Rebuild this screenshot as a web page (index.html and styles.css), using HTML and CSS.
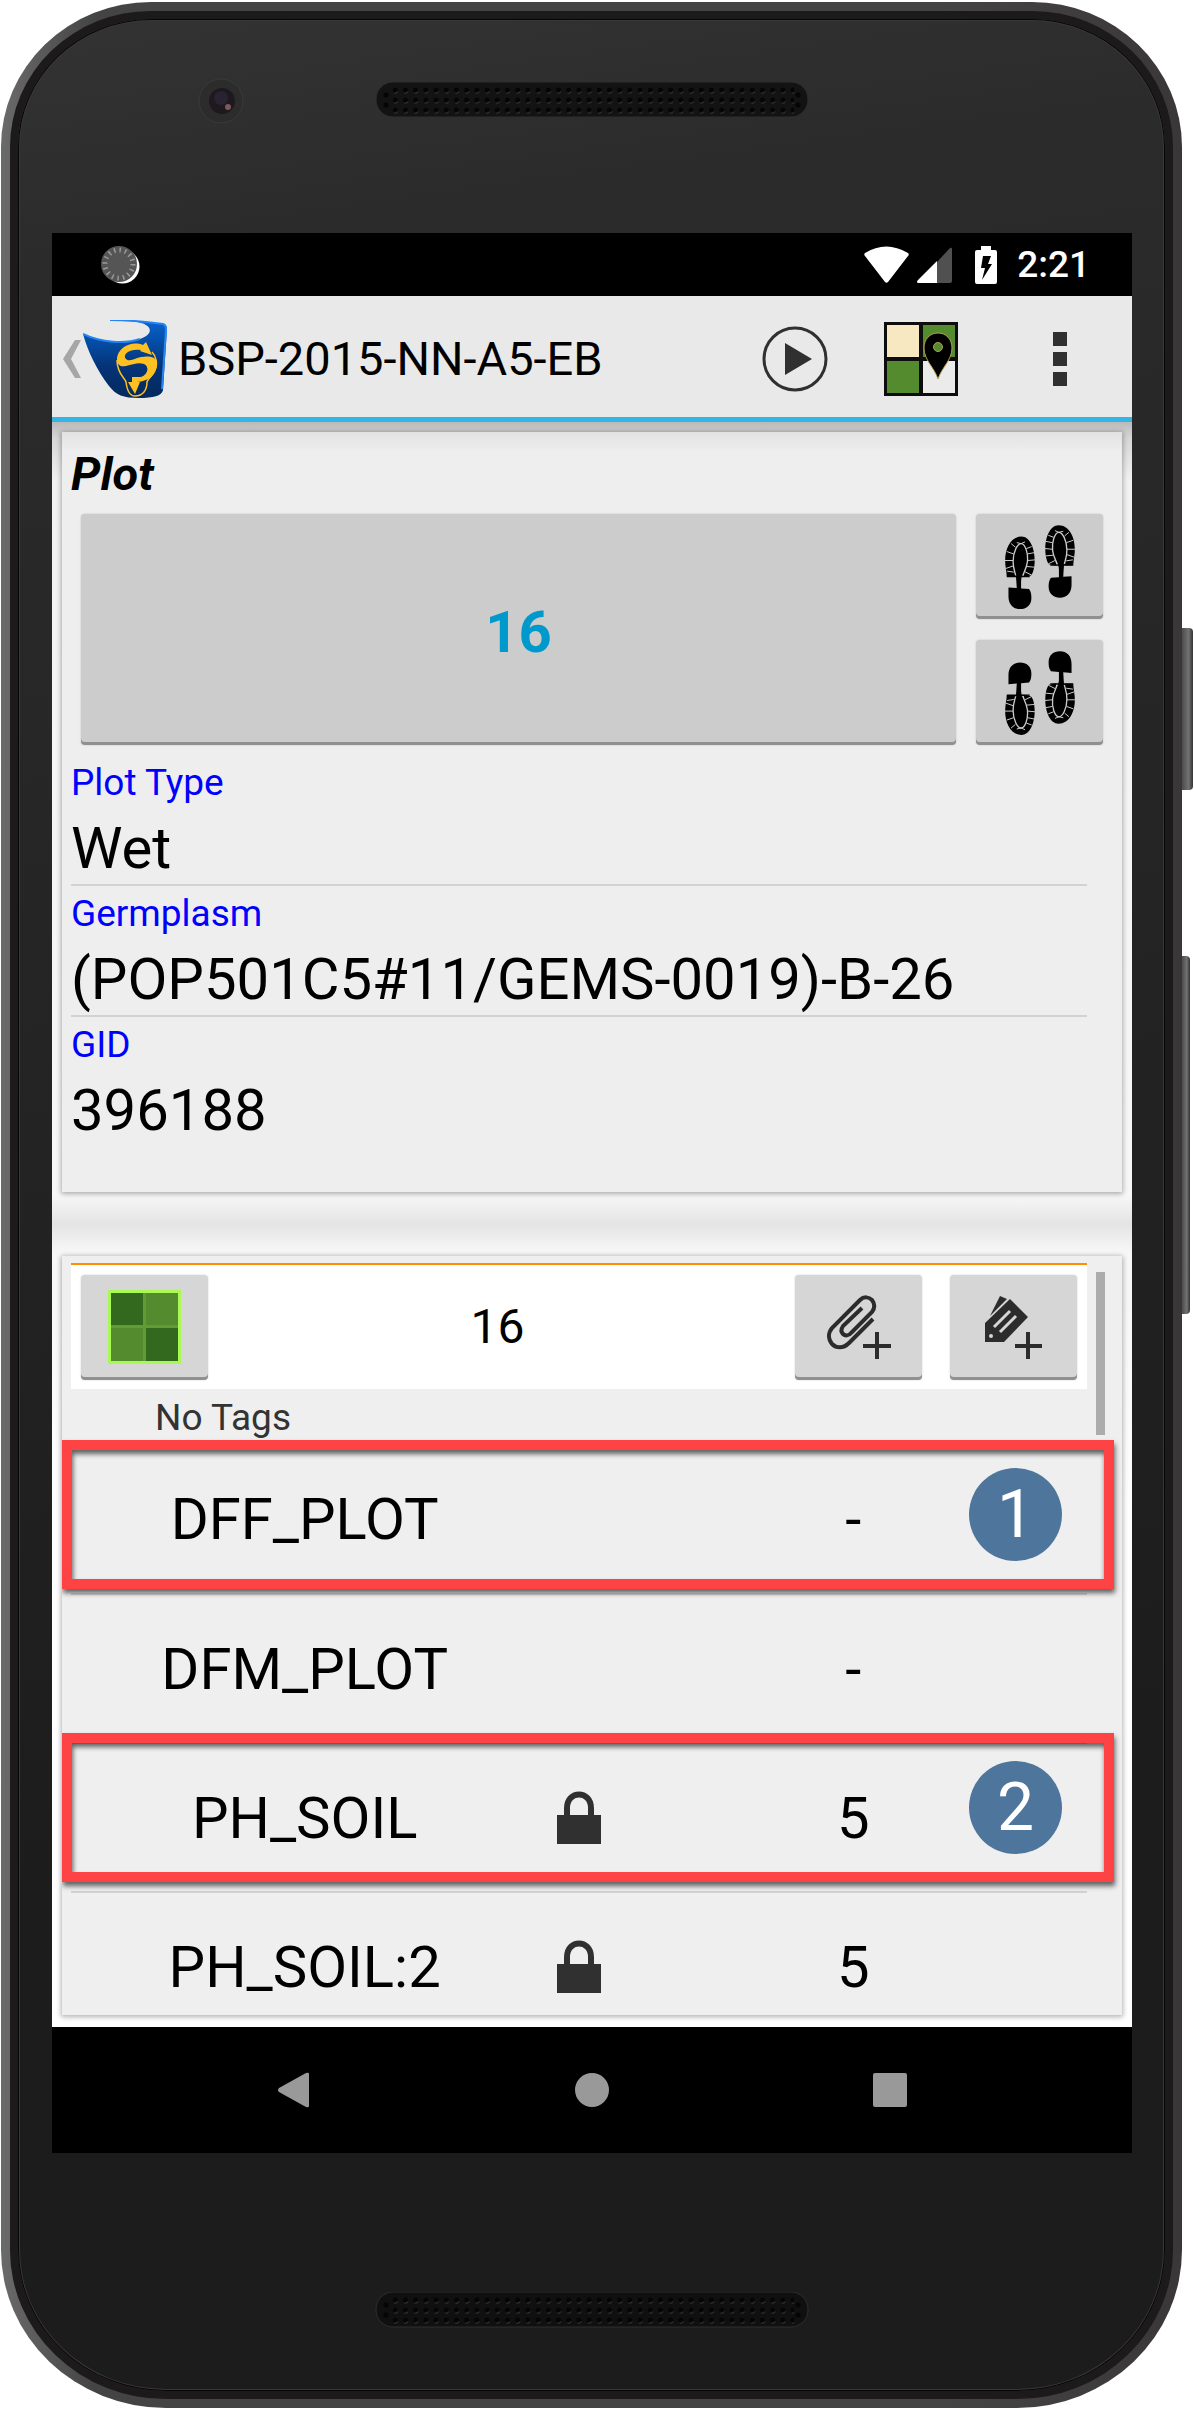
FILE: index.html
```html
<!DOCTYPE html>
<html lang="en">
<head>
<meta charset="utf-8">
<meta name="viewport" content="width=device-width, initial-scale=1">
<title>BSP-2015-NN-A5-EB</title>
<link rel="stylesheet" href="styles.css">
</head>
<body>
<svg width="0" height="0" class="defs" aria-hidden="true">
  <defs>
    <pattern id="holes" x="5" y="3" width="10.2" height="10" patternUnits="userSpaceOnUse">
      <circle cx="5.1" cy="5" r="2.6" fill="#050505"/>
      <path d="M4 8A3 3 0 0 0 7.500 6.500" stroke="#333" stroke-width="1" fill="none"/>
    </pattern>
    <linearGradient id="cup" x1="0" y1="0" x2="0" y2="1">
      <stop offset="0" stop-color="#0a62d0"/>
      <stop offset=".25" stop-color="#0450ab"/>
      <stop offset=".6" stop-color="#053376"/>
      <stop offset="1" stop-color="#032a5e"/>
    </linearGradient>
    <g id="boot-left">
      <path d="M137 196C136 178 132 165 132 148C132 110 150 76 181 76C206 76 221 110 221 148C221 170 216 186 210 193L190 197Z" fill="#000"/>
      <path d="M165 205C164 180 156 180 156 150C156 120 170 97 180 97C192 97 202 125 199 152C196 176 185 185 182 205" fill="#000" stroke="#ccc" stroke-width="4"/>
      <path d="M180 97L167 94M180 97L192 92M163 108L150 97M157 128L137 121M156 148L131 148M157 164L134 172M158 183L138 180M196 112L212 106M200 128L221 124M200 148L222 146M197 166L220 168M192 182L212 192M188 186L186 196" stroke="#ccc" stroke-width="3" fill="none"/>
      <path d="M137 192L206 194L206 198L180 198L180 232L204 234C211 242 211 254 211 262C211 282 196 294 177 294C156 294 142 280 142 256V229L167 231L165 198H137Z" fill="#000"/>
    </g>
    <g id="boots">
      <use href="#boot-left"/>
      <use href="#boot-left" transform="translate(474 -34) scale(-1 1)"/>
    </g>
  </defs>
</svg>

<div class="device">
  <span class="side-key side-key-power"></span>
  <span class="side-key side-key-volume"></span>
  <div class="face">
    <div class="bezel bezel-top">
      <svg class="camera" viewBox="0 0 46 46" aria-hidden="true">
        <circle cx="23" cy="23" r="22" fill="#2c2c2d" stroke="#3a3a3b"/>
        <circle cx="24" cy="23" r="13" fill="#1d191f"/>
        <circle cx="23" cy="20" r="7" fill="#282330"/>
        <circle cx="30" cy="29" r="3" fill="#80575a"/>
      </svg>
      <svg class="speaker" viewBox="0 0 434 36" aria-hidden="true">
        <rect x="1" y="0" width="432" height="35" rx="17" fill="#131313" stroke="#2f2f2f"/>
        <rect x="15.200" y="3" width="404" height="30" fill="url(#holes)"/>
        <g fill="#050505"><circle cx="11" cy="13" r="2.600"/><circle cx="11" cy="23" r="2.600"/><circle cx="423" cy="13" r="2.600"/><circle cx="423" cy="23" r="2.600"/></g>
      </svg>
    </div>

    <main class="screen">
      <div class="status-bar">
        <svg class="sync" viewBox="0 0 40 40" aria-label="Syncing">
          <circle cx="21.500" cy="21.500" r="17" fill="#fff"/>
          <circle cx="18" cy="19" r="18" fill="#555"/>
          <circle cx="18" cy="19" r="14" fill="none" stroke="#999" stroke-width="5" stroke-dasharray="1.500 4"/>
        </svg>
        <div class="status-icons">
          <svg width="45" height="37" viewBox="0 0 45 37" aria-label="Wi-Fi"><path d="M1 10C0 9 0 8 1 7Q22 -6 44 7C45 8 45 9 44 10L24 36Q22.500 37.500 21 36Z" fill="#fff"/></svg>
          <svg class="signal" width="35" height="36" viewBox="0 0 35 36" aria-label="Signal"><path d="M20 15L33 1Q35 0 35 2V34Q35 36 33 36H20Z" fill="#505050"/><path d="M20 14V36H1Q-1 35 1 33Z" fill="#fff"/></svg>
          <svg class="battery" width="22" height="38" viewBox="0 0 22 38" aria-label="Charging"><path d="M6 0H16V4H20Q22 4 22 6V36Q22 38 20 38H2Q0 38 0 36V6Q0 4 2 4H6Z" fill="#fff"/><path d="M8 10H16L13 18H17L7 34L10 22H6Z" fill="#000"/></svg>
          <time>2:21</time>
        </div>
      </div>

      <header class="action-bar">
        <button class="plain up" aria-label="Back">
          <svg width="18" height="38" viewBox="0 0 18 38"><path d="M12 0H18L8 19L18 38H12L0 19Z" fill="#a6a6a6"/></svg>
        </button>
        <svg class="logo" viewBox="0 0 84 79" aria-hidden="true">
          <path d="M0 14C18 23 43 24 57 19C71 14 69 6 58 3C48 0 38 1 27 0C48 0 65 2 80 4Q84 5 84 9L80 70C79 76 70 78 56 78C40 78 33 75 26 66C14 50 5 32 0 14Z" fill="url(#cup)"/>
          <path d="M0 14C18 23 43 24 57 19M27 0C48 0 65 2 80 4Q83 5 83 9L79 69" fill="none" stroke="#2584f2" stroke-width="2"/>
          <path d="M60 25C48 20 35 28 34 38C34 46 38 47 43 46C50 44 56 42 61 44C66 46 66 54 58 57H49V62H45L52 74L57 62H54C66 61 74 55 74 43C73 36 65 36 58 37C50 39 46 42 43 39C39 35 46 28 58 30L57 31L69 35L63 22Z" fill="#ffc122"/>
          <path d="M69 32C73 36 75 44 72 50C69 57 65 58 64 62C64 70 60 76 52 76C46 76 44 70 43 62C42 58 34 54 34 40" fill="none" stroke="#ffc122" stroke-width="1.500"/>
        </svg>
        <h1>BSP-2015-NN-A5-EB</h1>
        <button class="plain play" aria-label="Start">
          <svg width="66" height="66" viewBox="0 0 66 66"><circle cx="33" cy="33" r="31" fill="none" stroke="#303030" stroke-width="3"/><path d="M23 17L50 33L23 49Z" fill="#303030"/></svg>
        </button>
        <button class="plain map" aria-label="Field map">
          <svg width="74" height="74" viewBox="0 0 74 74"><path d="M0 0H74V74H0Z" fill="#0d0d0d"/><path d="M3 3H35V35H3Z" fill="#f7e8c2"/><path d="M39 3H71V35H39ZM3 39H35V71H3Z" fill="#548b2e"/><path d="M39 39H71V71H39Z" fill="#ebebeb"/><path d="M54 57C50 45 40 38 40 26C40 17 46 11 54 11S68 17 68 26C68 38 58 45 54 57Z" stroke="#b69f52" stroke-width="1"/><circle cx="54" cy="25" r="4.500" fill="#548b2e" stroke="#b69f52"/></svg>
        </button>
        <button class="plain more" aria-label="More options">
          <svg width="14" height="54" viewBox="0 0 14 54"><path d="M0 0H14V14H0ZM0 20H14V34H0ZM0 40H14V54H0Z" fill="#303030"/></svg>
        </button>
      </header>

      <section class="pane pane-plot">
        <div class="card plot-card">
          <h2>Plot</h2>
          <div class="plot-controls">
            <button class="key plot-number">16</button>
            <button class="key step" aria-label="Next plot"><svg width="70" height="84" viewBox="132 41 210 253"><use href="#boots"/></svg></button>
            <button class="key step" aria-label="Previous plot"><svg width="70" height="84" viewBox="132 41 210 253"><g transform="translate(0 370) scale(1 -1)"><use href="#boot-left"/></g><g transform="translate(474 336) scale(-1 -1)"><use href="#boot-left"/></g></svg></button>
          </div>
          <dl class="facts">
            <div><dt>Plot Type</dt><dd>Wet</dd></div>
            <div><dt>Germplasm</dt><dd>(POP501C5#11/GEMS-0019)-B-26</dd></div>
            <div><dt>GID</dt><dd>396188</dd></div>
          </dl>
        </div>
      </section>

      <section class="pane pane-traits">
        <div class="card trait-card">
          <div class="trait-head">
            <button class="key" aria-label="Plot layout"><svg width="73" height="74" viewBox="0 0 73 74"><path d="M0 0H73V74H0Z" fill="#a9f955"/><path d="M3 3H70V71H3Z" fill="#629a36"/><path d="M3 3H35V35H3ZM38 38H70V71H38Z" fill="#33691e"/><path d="M38 3H70V35H38ZM3 38H35V71H3Z" fill="#558b2f"/></svg></button>
            <span class="trait-plot">16</span>
            <button class="key" aria-label="Add attachment"><svg width="64" height="64" viewBox="0 0 64 64" fill="none" stroke="#2c2c2c" stroke-width="4"><path d="M46 24L22 48C16 54 9 53 5 49C1 44 1 38 5 33L33 5C37 1 42 2 45 5C48 9 48 13 45 17L24 38C22 41 18 41 16 39C14 37 14 34 16 31L35 13"/><path d="M50 37V64M36 51H64"/></svg></button>
            <button class="key" aria-label="Add tag"><svg width="57" height="63" viewBox="0 0 57 63"><path d="M15 0L22 3L5 20ZM0 27L25 3L43 21L19 46H0Z" fill="#2c2c2c"/><path d="M9 31L25 15M15 36L31 20" stroke="#d6d6d6" stroke-width="3"/><circle cx="6" cy="40" r="2" fill="#d6d6d6"/><path d="M43 36V63M30 50H57" stroke="#2c2c2c" stroke-width="4"/></svg></button>
          </div>
          <p class="tags">No Tags</p>
          <table class="traits">
            <tbody>
              <tr><th scope="row">DFF_PLOT</th><td></td><td>-<span class="callout"><b>1</b></span></td></tr>
              <tr><th scope="row">DFM_PLOT</th><td></td><td>-</td></tr>
              <tr><th scope="row">PH_SOIL</th><td><svg class="lock" viewBox="0 0 44 53" aria-label="Locked"><path d="M0 24H44V53H0Z" fill="#303030"/><path d="M10 26V17C10 -1 34 -1 34 17V26" fill="none" stroke="#303030" stroke-width="6"/></svg></td><td>5<span class="callout callout-raised"><b>2</b></span></td></tr>
              <tr><th scope="row">PH_SOIL:2</th><td><svg class="lock" viewBox="0 0 44 53" aria-label="Locked"><path d="M0 24H44V53H0Z" fill="#303030"/><path d="M10 26V17C10 -1 34 -1 34 17V26" fill="none" stroke="#303030" stroke-width="6"/></svg></td><td>5</td></tr>
            </tbody>
          </table>
          <span class="scroll-thumb"></span>
        </div>
      </section>

      <nav class="nav-bar">
        <button class="plain" aria-label="Back"><svg width="32" height="36" viewBox="0 0 32 36"><path d="M1 16L28 1Q31 0 31 2V34Q31 36 28 35L1 20Q-1 18 1 16Z" fill="#999"/></svg></button>
        <button class="plain" aria-label="Home"><svg width="36" height="36" viewBox="0 0 36 36"><circle cx="18" cy="18" r="17" fill="#999"/></svg></button>
        <button class="plain" aria-label="Recent apps"><svg width="34" height="34" viewBox="0 0 34 34"><rect width="34" height="34" rx="2" fill="#999"/></svg></button>
      </nav>
    </main>

    <div class="bezel bezel-bottom">
      <svg class="speaker" viewBox="0 0 434 36" aria-hidden="true">
        <rect x="1" y="0" width="432" height="35" rx="17" fill="#101010" stroke="#2f2f2f"/>
        <rect x="15.200" y="3" width="404" height="30" fill="url(#holes)"/>
        <g fill="#050505"><circle cx="11" cy="13" r="2.600"/><circle cx="11" cy="23" r="2.600"/><circle cx="423" cy="13" r="2.600"/><circle cx="423" cy="23" r="2.600"/></g>
      </svg>
    </div>
  </div>
</div>
</body>
</html>
```
FILE: styles.css
```css
* { box-sizing: border-box; }

body {
  margin: 0;
  padding: 2px 12px 1px 1px;
  background: #fff;
  color: #000;
  font-family: Roboto, "Liberation Sans", sans-serif;
}

h1, h2, p, dl, dd { margin: 0; }
svg { display: block; }
.defs { position: absolute; }

button {
  display: flex;
  align-items: center;
  justify-content: center;
  margin: 0;
  padding: 0;
  border: 0;
  font: inherit;
}

.plain { background: none; }

/* Handset */
.device {
  position: relative;
  padding: 9px;
  border-radius: 150px 150px 165px 165px / 145px 145px 158px 158px;
  background: linear-gradient(90deg, #6a6a6a, #454445 8%, #454445 80%, #3a3738);
}

.side-key {
  position: absolute;
  left: 100%;
  background: linear-gradient(90deg, #4c4c4c, #727272 60%, #333);
  border-radius: 0 4px 4px 0;
}
.side-key-power { top: 626px; width: 11px; height: 162px; }
.side-key-volume { top: 954px; width: 8px; height: 358px; }

.face {
  border: 8px solid #1c1a1b;
  border-radius: 141px 141px 156px 156px / 136px 136px 149px 149px;
  background: linear-gradient(172deg, #333334, #2b2b2b 10%, #232323 45%, #1c1c1c 75%);
  box-shadow: inset 0 0 0 1px #060606, inset 0 0 0 2px #383838;
}

.bezel { display: flex; justify-content: center; position: relative; }
.bezel-top { height: 214px; padding-top: 63px; }
.bezel-bottom { height: 238px; padding-top: 139px; }
.speaker { width: 434px; height: 36px; }
.camera { position: absolute; left: 180px; top: 59px; width: 46px; height: 46px; }

.screen { margin: 0 33px 0 34px; background: #fff; }

.status-bar {
  display: flex;
  align-items: center;
  justify-content: space-between;
  height: 63px;
  padding: 0 42px 0 49px;
  background: #000;
  color: #fff;
}
.sync { width: 40px; height: 40px; }
.status-icons { display: flex; align-items: center; }
.signal { margin-left: 8px; }
.battery { margin-left: 23px; }
.status-icons time { margin-left: 20px; font-size: 37px; line-height: 43px; font-weight: 500; }

.action-bar {
  display: flex;
  align-items: center;
  height: 126px;
  padding: 5px 65px 0 11px;
  border-bottom: 5px solid #33b5e5;
  background: #e9e9e9;
}
.logo { width: 84px; height: 79px; margin: 0 11px 0 2px; }
.action-bar h1 { flex: 1; font-size: 47px; line-height: 56px; font-weight: 400; }
.map { margin: 0 95px 0 56px; }

/* Panes */
.pane { padding: 10px 10px 32px; }
.pane-plot { background: linear-gradient(#bababa, #d6d6d6 16px, #f2f2f2 60px, #f7f7f7 740px, #f7f7f7 774px, #e4e4e4); }
.pane-traits { padding: 32px 10px 12px; background: linear-gradient(#e4e4e4, #f7f7f7 28px, #f7f7f7 80px, #fff 300px); }

.card {
  background: #eee;
  box-shadow: 0 1px 5px 1px rgba(0, 0, 0, .3);
}

.plot-card {
  padding: 14px 9px 46px;
  background: linear-gradient(#e2e2e2, #eee 20px);
}
.plot-card h2 { font-size: 47px; line-height: 56px; font-style: italic; font-weight: 700; }

.key {
  width: 127px;
  height: 105px;
  border-radius: 4px;
  background: #d6d6d6;
  box-shadow: inset 0 -3px 0 #909090, 0 0 2px rgba(0, 0, 0, .2);
}
.plot-controls {
  display: grid;
  grid-template-columns: 1fr 127px;
  gap: 21px 20px;
  padding: 12px 10px 16px;
}
.plot-controls .key { background: #ccc; }
.plot-controls .plot-number {
  grid-row: span 2;
  width: auto;
  height: auto;
  padding-top: 4px;
  color: #0099cc;
  font-size: 58px;
  line-height: 68px;
  font-weight: 700;
}

.facts { display: grid; gap: 6px; padding-right: 26px; }
.facts div { border-bottom: 2px solid #d2d2d2; }
.facts div:last-child { border: 0; }
.facts dt { color: #00f; font-size: 37px; line-height: 43px; padding-bottom: 10px; }
.facts dd { font-size: 58px; line-height: 68px; padding-bottom: 2px; white-space: nowrap; }

.trait-card {
  position: relative;
  max-height: 759px;
  padding: 7px 35px 0 9px;
  overflow: hidden;
  background: #efefef;
}
.trait-head {
  display: flex;
  align-items: center;
  gap: 28px;
  height: 126px;
  padding: 0 10px;
  border-top: 2px solid #ff8f00;
  background: #fff;
}
.trait-plot { flex: 1; padding-right: 8px; font-size: 48px; line-height: 56px; text-align: center; }
.tags { padding: 7px 0 6px 84px; color: #333; font-size: 37px; line-height: 43px; }

.traits {
  width: 100%;
  border-collapse: collapse;
  table-layout: fixed;
  font-size: 58px;
  line-height: 68px;
  text-align: center;
}
.traits tr { position: relative; height: 149px; border-bottom: 2px solid #d2d2d2; }
.traits th, .traits td { width: 46%; padding: 0; font-weight: 400; }
.traits td:nth-child(2) { width: 8%; }
.lock { width: 44px; height: 53px; margin: 0 auto; }

/* Numbered annotations laid over the rows */
.callout {
  position: absolute;
  inset: -5px -27px 3px -9px;
  display: flex;
  align-items: center;
  justify-content: flex-end;
  padding-right: 42px;
  border: 10px solid #fd4343;
  box-shadow: 1px 4px 5px rgba(0, 0, 0, .6), inset 1px 4px 5px rgba(0, 0, 0, .6);
}
.callout-raised { top: -10px; bottom: 8px; }
.callout b {
  width: 93px;
  border-radius: 50%;
  background: #4e759b;
  color: #fff;
  font-size: 66px;
  line-height: 93px;
  font-weight: 400;
}
.scroll-thumb {
  position: absolute;
  top: 16px;
  right: 17px;
  width: 9px;
  height: 163px;
  background: #acacac;
}

.nav-bar {
  display: grid;
  grid-template-columns: repeat(3, 1fr);
  height: 126px;
  padding: 0 93px;
  background: #000;
}
```
